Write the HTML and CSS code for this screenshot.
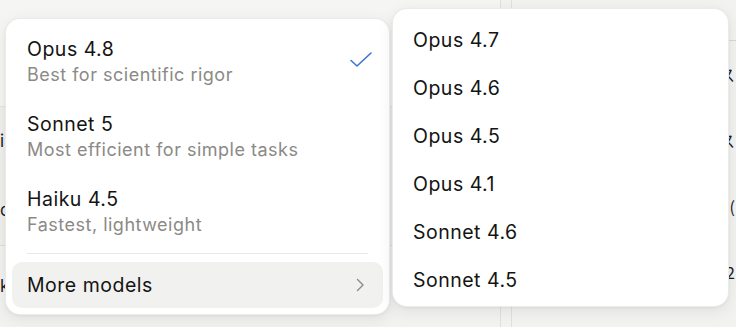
FILE: index.html
```html
<!DOCTYPE html>
<html lang="en">
<head>
  <meta charset="UTF-8" />
  <title>Model picker</title>
  <link rel="stylesheet" href="styles.css">
</head>
<body>
  <div class="page">
    <div class="main">
      <div class="band top"></div>
      <div class="band rows">
        <div class="row">i</div>
        <div class="row">o</div>
      </div>
      <div class="band foot">k</div>
    </div>
    <div class="divider-col"></div>
    <div class="side">
      <div class="side-line"></div>
      <div class="side-text">ス</div>
      <div class="side-text">ス</div>
      <div class="side-text">(</div>
      <div class="side-text">2</div>
    </div>
  </div>

  <div class="menu menu-main">
    <div class="item selected">
      <div class="item-text">
        <div class="title">Opus 4.8</div>
        <div class="sub">Best for scientific rigor</div>
      </div>
      <svg class="check" width="24" height="18" viewBox="0 0 24 18">
        <path d="M2 9.5 L8 15 L22 2" fill="none" stroke="#3b74d8" stroke-width="1.6" stroke-linecap="round" stroke-linejoin="round"/>
      </svg>
    </div>
    <div class="item">
      <div class="item-text">
        <div class="title">Sonnet 5</div>
        <div class="sub">Most efficient for simple tasks</div>
      </div>
    </div>
    <div class="item">
      <div class="item-text">
        <div class="title">Haiku 4.5</div>
        <div class="sub">Fastest, lightweight</div>
      </div>
    </div>
    <div class="sep"></div>
    <div class="more">
      <span>More models</span>
      <svg class="chev" width="10" height="14" viewBox="0 0 10 14">
        <path d="M2.5 1.5 L8 7 L2.5 12.5" fill="none" stroke="#8a8a86" stroke-width="1.4" stroke-linecap="round" stroke-linejoin="round"/>
      </svg>
    </div>
  </div>

  <div class="menu menu-sub">
    <div class="sub-item">Opus 4.7</div>
    <div class="sub-item">Opus 4.6</div>
    <div class="sub-item">Opus 4.5</div>
    <div class="sub-item">Opus 4.1</div>
    <div class="sub-item">Sonnet 4.6</div>
    <div class="sub-item">Sonnet 4.5</div>
  </div>
</body>
</html>
```

FILE: styles.css
```css
body {
  margin: 0;
  font-family: Inter, "Noto Sans", sans-serif;
  background: #f2f2f0;
  color: #1a1a1a;
  width: 736px;
  height: 327px;
  overflow: hidden;
  position: relative;
}

.page {
  display: flex;
  height: 327px;
}

.main {
  width: 500px;
  display: flex;
  flex-direction: column;
}

.band.top {
  height: 106px;
  background: #f5f5f4;
  border-bottom: 1px solid #e4e4e1;
}

.band.rows {
  height: 138px;
  background: #efefed;
  border-bottom: 1px solid #deded9;
}

.row {
  height: 69px;
  line-height: 69px;
  font-size: 17px;
}

.band.foot {
  flex: 1;
  font-size: 17px;
  padding-top: 30px;
}

.divider-col {
  width: 10px;
  border-left: 1px solid #e0e0dd;
  border-right: 1px solid #e0e0dd;
}

.side {
  flex: 1;
  padding-top: 40px;
  text-align: right;
}

.side-line {
  border-top: 1px solid #d8d8d4;
  margin-left: 200px;
}

.side-text {
  font-family: "Noto Sans CJK JP", sans-serif;
  font-size: 16px;
  height: 66px;
  line-height: 66px;
  padding-right: 1px;
}

.menu {
  position: absolute;
  background: #fff;
  border: 1px solid rgba(0, 0, 0, 0.08);
  border-radius: 15px;
  box-shadow: 0 4px 16px rgba(0, 0, 0, 0.08), 0 1px 3px rgba(0, 0, 0, 0.05);
  box-sizing: border-box;
}

.menu-main {
  left: 5px;
  top: 18px;
  width: 385px;
  height: 297px;
  padding: 5px 6px;
}

.item {
  display: flex;
  align-items: center;
  padding: 12px 16px 11px 15px;
}

.item-text {
  flex: 1;
}

.title {
  font-size: 19.5px;
  letter-spacing: 0.5px;
  line-height: 26px;
  color: #141413;
}

.sub {
  font-size: 18px;
  letter-spacing: 0.5px;
  line-height: 26px;
  color: #8b8a86;
}

.check {
  margin-right: -6px;
  margin-top: -4px;
}

.sep {
  height: 1px;
  background: #e8e8e5;
  margin: 4px 15px 8px;
}

.more {
  display: flex;
  align-items: center;
  justify-content: space-between;
  height: 46px;
  padding: 0 16px 0 15px;
  background: #f1f1f0;
  border-radius: 10px;
  font-size: 19.5px;
  letter-spacing: 0.5px;
  color: #141413;
}

.chev {
  margin-right: 2px;
}

.menu-sub {
  left: 392px;
  top: 8px;
  width: 337px;
  height: 299px;
  padding: 7px 6px;
}

.sub-item {
  height: 48px;
  line-height: 48px;
  padding: 0 14px;
  font-size: 19.5px;
  letter-spacing: 0.5px;
  color: #141413;
}
```
